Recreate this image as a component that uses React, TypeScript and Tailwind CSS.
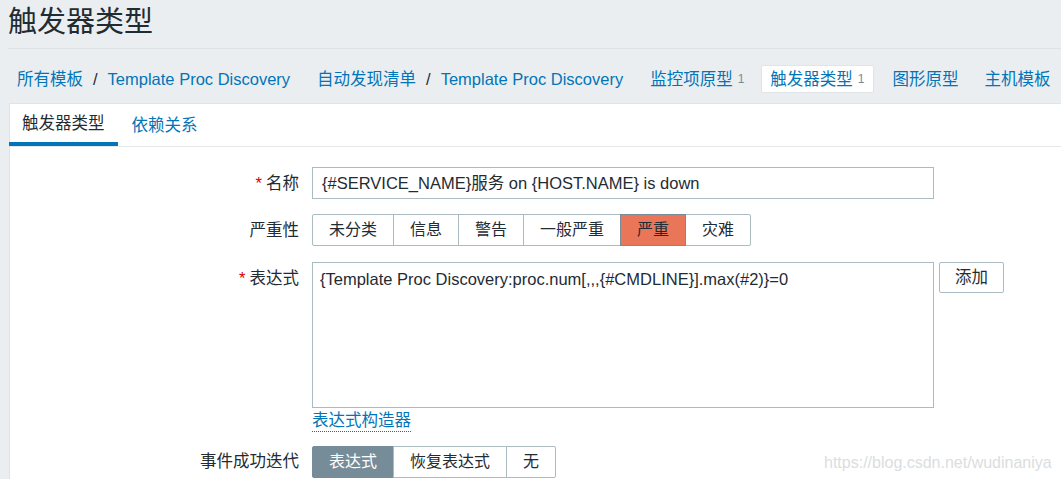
import React from "react";

const font = { fontFamily: '"Liberation Sans", Arial, "Noto Sans CJK SC", sans-serif' };

const Sep = () => <span className="mx-[10px] text-[#1f2c33]">/</span>;

const Count = () => <span className="ml-[5px] text-[12px] text-[#768d99]">1</span>;

const severities = ["未分类", "信息", "警告", "一般严重", "严重", "灾难"];
const okModes = ["表达式", "恢复表达式", "无"];

export default function App() {
  return (
    <div style={font} className="relative min-h-[479px] w-[1061px] overflow-hidden bg-[#ebeef0] pl-[9px] text-[16.5px] text-[#1f2c33]">
      <div className="-ml-[1px] h-[49px] border-b border-[#dde2e5] text-[29px] leading-[44px]">触发器类型</div>

      <div className="flex h-[54px] items-start whitespace-nowrap pl-[8px] pt-[16px] text-[#0275b8]">
        <div className="flex h-[28px] items-center">
          <span>所有模板</span>
          <Sep />
          <span>Template Proc Discovery</span>
        </div>
        <div className="ml-[27px] flex h-[28px] items-center">
          <span>自动发现清单</span>
          <Sep />
          <span>Template Proc Discovery</span>
        </div>
        <div className="ml-[27px] flex h-[28px] items-center">
          <span>监控项原型</span>
          <Count />
        </div>
        <div className="ml-[17px] flex h-[28px] items-center rounded-[2px] border border-[#dfe4e7] bg-white px-[8px]">
          <span>触发器类型</span>
          <Count />
        </div>
        <div className="ml-[19px] flex h-[28px] items-center">图形原型</div>
        <div className="ml-[26px] flex h-[28px] items-center">主机模板</div>
      </div>

      <div className="h-[376px] border-l border-t border-[#dfe4e7] bg-white">
        <div className="flex border-b border-[#e4e8ea]">
          <div className="-ml-[1px] flex h-[42px] items-center border-b-4 border-[#0275b8] px-[13px]">触发器类型</div>
          <div className="flex h-[42px] items-center px-[14px] text-[#0275b8]">依赖关系</div>
        </div>

        <div className="pt-[20px]">
          <div className="flex items-center">
            <div className="w-[289px] text-right">
              <span className="mr-[4px] text-[#d40000]">*</span>名称
            </div>
            <div className="ml-[13px] flex h-[32px] w-[622px] items-center border border-[#acbbc2] bg-white px-[9px]">
              {"{#SERVICE_NAME}服务 on {HOST.NAME} is down"}
            </div>
          </div>

          <div className="mt-[15px] flex items-center">
            <div className="w-[289px] text-right">严重性</div>
            <div className="ml-[13px] flex h-[32px] text-[16px]">
              {severities.map((s, i) => (
                <div
                  key={s}
                  className={
                    "flex items-center border px-[16px] " +
                    (i > 0 ? "-ml-[1px] " : "") +
                    (i === 0 ? "rounded-l-[2px] " : "") +
                    (i === severities.length - 1 ? "rounded-r-[2px] " : "") +
                    (s === "严重" ? "relative z-10 border-[#768d99] bg-[#e97659]" : "border-[#acbbc2] bg-white")
                  }
                >
                  {s}
                </div>
              ))}
            </div>
          </div>

          <div className="mt-[16px] flex items-start">
            <div className="flex h-[32px] w-[289px] items-center justify-end">
              <span className="mr-[4px] text-[#d40000]">*</span>表达式
            </div>
            <div className="ml-[13px]">
              <div className="h-[146px] w-[622px] border border-[#acbbc2] bg-white px-[7px] pt-[4px]">
                {"{Template Proc Discovery:proc.num[,,,{#CMDLINE}].max(#2)}=0"}
              </div>
              <div className="mt-[1px] inline-block border-b border-dotted border-[#0275b8] leading-[21px] text-[#0275b8]">表达式构造器</div>
            </div>
            <div className="ml-[5px] flex h-[31px] items-center rounded-[2px] border border-[#acbbc2] bg-white px-[15px]">添加</div>
          </div>

          <div className="mt-[13px] flex items-center">
            <div className="w-[289px] text-right">事件成功迭代</div>
            <div className="ml-[13px] flex h-[32px] text-[16px]">
              {okModes.map((s, i) => (
                <div
                  key={s}
                  className={
                    "flex items-center border px-[16px] " +
                    (i > 0 ? "-ml-[1px] " : "") +
                    (i === 0 ? "rounded-l-[2px] border-[#768d99] bg-[#768d99] text-white" : "border-[#acbbc2] bg-white") +
                    (i === okModes.length - 1 ? " rounded-r-[2px]" : "")
                  }
                >
                  {s}
                </div>
              ))}
            </div>
          </div>
        </div>
      </div>

      <div className="absolute left-[824px] top-[451px] text-[16px] text-[#d9dee1]">https://blog.csdn.net/wudinaniya</div>
    </div>
  );
}
